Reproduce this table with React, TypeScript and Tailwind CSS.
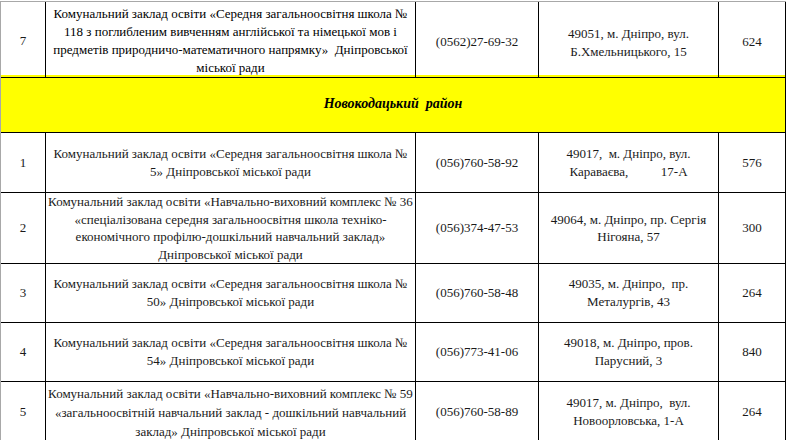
import React from 'react';

type Row = {
  n: string;
  name: string[];
  phone: string;
  addr: string[];
  count: string;
  h: string;
  lead?: string;
};

const rows: Row[] = [
  {
    n: '1',
    name: ['Комунальний заклад освіти «Середня загальноосвітня школа №', '5» Дніпровської міської ради'],
    phone: '(056)760-58-92',
    addr: ['49017,  м. Дніпро, вул.', 'Караваєва,          17-А'],
    count: '576',
    h: 'h-[60px]',
  },
  {
    n: '2',
    name: [
      'Комунальний заклад освіти «Навчально-виховний комплекс № 36',
      '«спеціалізована середня загальноосвітня школа техніко-',
      'економічного профілю-дошкільний навчальний заклад»',
      'Дніпровської міської ради',
    ],
    phone: '(056)374-47-53',
    addr: ['49064, м. Дніпро, пр. Сергія', 'Нігояна, 57'],
    count: '300',
    h: 'h-[70px]',
  },
  {
    n: '3',
    name: ['Комунальний заклад освіти «Середня загальноосвітня школа №', '50» Дніпровської міської ради'],
    phone: '(056)760-58-48',
    addr: ['49035, м. Дніпро,  пр.', 'Металургів, 43'],
    count: '264',
    h: 'h-[60px]',
  },
  {
    n: '4',
    name: ['Комунальний заклад освіти «Середня загальноосвітня школа №', '54» Дніпровської міської ради'],
    phone: '(056)773-41-06',
    addr: ['49018, м. Дніпро, пров.', 'Парусний, 3'],
    count: '840',
    h: 'h-[59px]',
  },
  {
    n: '5',
    name: [
      'Комунальний заклад освіти «Навчально-виховний комплекс № 59',
      '«загальноосвітній навчальний заклад - дошкільний навчальний',
      'заклад» Дніпровської міської ради',
    ],
    phone: '(056)760-58-89',
    addr: ['49017, м. Дніпро,  вул.', 'Новоорловська, 1-А'],
    count: '264',
    h: 'h-[61px]',
    lead: 'leading-[19px]',
  },
];

const cell = 'flex flex-col items-center justify-center text-center border-r border-b border-black';

const Lines = ({ lines }: { lines: string[] }) => (
  <>
    {lines.map((l, i) => (
      <div key={i} className="whitespace-pre">
        {l}
      </div>
    ))}
  </>
);

const TableRow = ({ r }: { r: Row }) => (
  <div className={`grid grid-cols-[45px_370px_123px_180px_67px] ${r.h}`}>
    <div className={cell}>{r.n}</div>
    <div className={`${cell} ${r.lead ?? ''}`}>
      <Lines lines={r.name} />
    </div>
    <div className={cell}>{r.phone}</div>
    <div className={cell}>
      <Lines lines={r.addr} />
    </div>
    <div className={cell}>{r.count}</div>
  </div>
);

export default function App() {
  return (
    <div className="w-[787px] h-[440px] overflow-hidden bg-white pt-[1px] [font-family:'Liberation_Serif','Times_New_Roman',serif] text-[13px] leading-[17.6px] text-[#1a1a1a]">
      <div className="w-[786px] border-l border-t border-l-[#a8a8a8] border-t-[#a8a8a8]">
        <div className="grid grid-cols-[45px_370px_123px_180px_67px] h-[73px]">
          <div className={`${cell} pt-[3px]`}>7</div>
          <div className={`${cell} pt-[3px] leading-[18px] text-black`}>
            <Lines
              lines={[
                'Комунальний заклад освіти «Середня загальноосвітня школа №',
                '118 з поглибленим вивченням англійської та німецької мов і',
                'предметів природничо-математичного напрямку»  Дніпровської',
                'міської ради',
              ]}
            />
          </div>
          <div className={`${cell} pt-[4px]`}>(0562)27-69-32</div>
          <div className={`${cell} pt-[7px] leading-[18.5px]`}>
            <Lines lines={['49051, м. Дніпро, вул.', 'Б.Хмельницького, 15']} />
          </div>
          <div className={`${cell} pt-[4px]`}>624</div>
        </div>
        <div className="h-[58px] flex items-center justify-center bg-[#ffff00] border-r border-b border-black font-bold italic text-[14px] text-black">
          <span className="whitespace-pre">Новокодацький  район</span>
        </div>
        {rows.map((r) => (
          <TableRow key={r.n} r={r} />
        ))}
      </div>
    </div>
  );
}
